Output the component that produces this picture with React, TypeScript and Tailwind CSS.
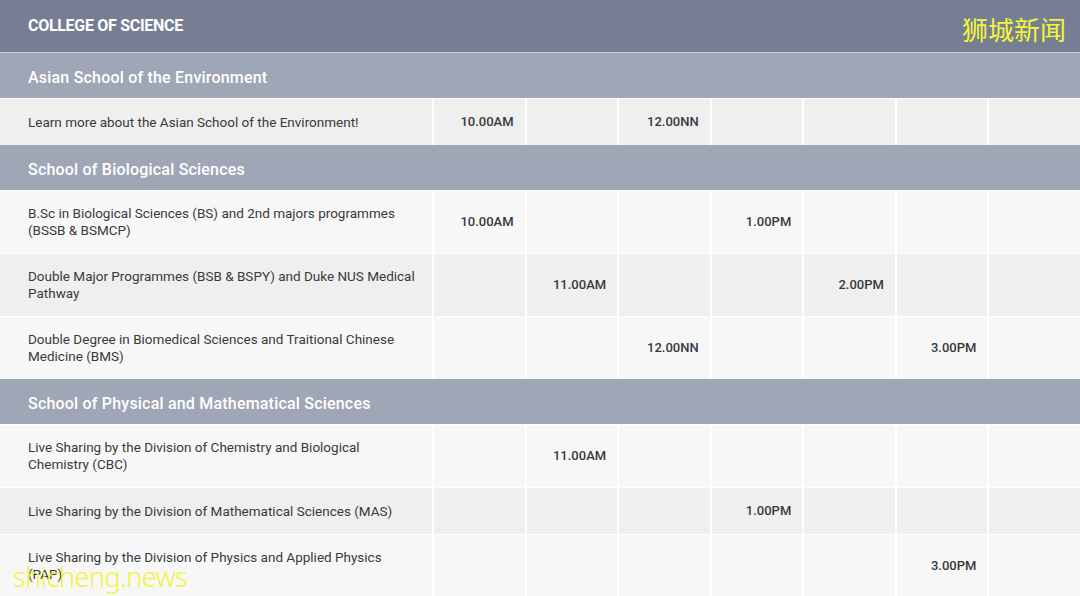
import React from "react";

type Row = { title: string[]; times: (string | null)[]; tall: boolean };
type Section = { name: string; rows: Row[] };

const sections: Section[] = [
  {
    name: "Asian School of the Environment",
    rows: [
      {
        title: ["Learn more about the Asian School of the Environment!"],
        times: ["10.00AM", null, "12.00NN", null, null, null, null],
        tall: false,
      },
    ],
  },
  {
    name: "School of Biological Sciences",
    rows: [
      {
        title: ["B.Sc in Biological Sciences (BS) and 2nd majors programmes", "(BSSB & BSMCP)"],
        times: ["10.00AM", null, null, "1.00PM", null, null, null],
        tall: true,
      },
      {
        title: ["Double Major Programmes (BSB & BSPY) and Duke NUS Medical", "Pathway"],
        times: [null, "11.00AM", null, null, "2.00PM", null, null],
        tall: true,
      },
      {
        title: ["Double Degree in Biomedical Sciences and Traitional Chinese", "Medicine (BMS)"],
        times: [null, null, "12.00NN", null, null, "3.00PM", null],
        tall: true,
      },
    ],
  },
  {
    name: "School of Physical and Mathematical Sciences",
    rows: [
      {
        title: ["Live Sharing by the Division of Chemistry and Biological", "Chemistry (CBC)"],
        times: [null, "11.00AM", null, null, null, null, null],
        tall: true,
      },
      {
        title: ["Live Sharing by the Division of Mathematical Sciences (MAS)"],
        times: [null, null, null, "1.00PM", null, null, null],
        tall: false,
      },
      {
        title: ["Live Sharing by the Division of Physics and Applied Physics", "(PAP)"],
        times: [null, null, null, null, null, "3.00PM", null],
        tall: true,
      },
    ],
  },
];

export default function App() {
  return (
    <div
      className="relative w-[1080px] h-[596px] overflow-hidden bg-white text-[#3a3a3a]"
      style={{ fontFamily: "Roboto, 'Liberation Sans', sans-serif" }}
    >
      <div className="h-[53px] bg-[#767e93] flex items-center pl-[28px] border-b border-[#c9ccd6]">
        <span className="text-white font-bold text-[16px] tracking-[-0.3px]">COLLEGE OF SCIENCE</span>
      </div>
      {sections.map((s, si) => (
        <div key={si}>
          <div className="h-[45px] bg-[#9fa6b5] flex items-center pl-[28px] pt-[5px]">
            <span className="text-white font-medium text-[16px] tracking-[0.2px]">{s.name}</span>
          </div>
          {s.rows.map((r, ri) => {
            const bg = si === 0 || ri % 2 === 1 ? "bg-[#efeff0]" : "bg-[#f7f7f8]";
            return (
              <div
                key={ri}
                className={`grid grid-cols-[432px_repeat(7,1fr)] gap-x-[2px] bg-white border-t border-white ${r.tall ? "h-[63px]" : "h-[47px]"}`}
              >
                <div className={`${bg} flex flex-col justify-center pl-[28px] text-[13.5px] leading-[17px]`}>
                  {r.title.map((t, i) => (
                    <div key={i}>{t}</div>
                  ))}
                </div>
                {r.times.map((t, i) => (
                  <div
                    key={i}
                    className={`${bg} flex items-center justify-end pr-[11px] text-[13px] font-medium`}
                  >
                    {t}
                  </div>
                ))}
              </div>
            );
          })}
        </div>
      ))}
      <div
        className="absolute top-[16px] right-[14px] text-[#f5f53a] text-[26px] leading-none"
        style={{ fontFamily: "'Noto Sans CJK SC', sans-serif" }}
      >
        狮城新闻
      </div>
      <div
        className="absolute left-[13px] top-[563px] text-[#f2f23a] text-[27px] leading-none font-light tracking-[-0.5px]"
        style={{ fontFamily: "'Noto Sans', sans-serif" }}
      >
        shicheng.news
      </div>
    </div>
  );
}
